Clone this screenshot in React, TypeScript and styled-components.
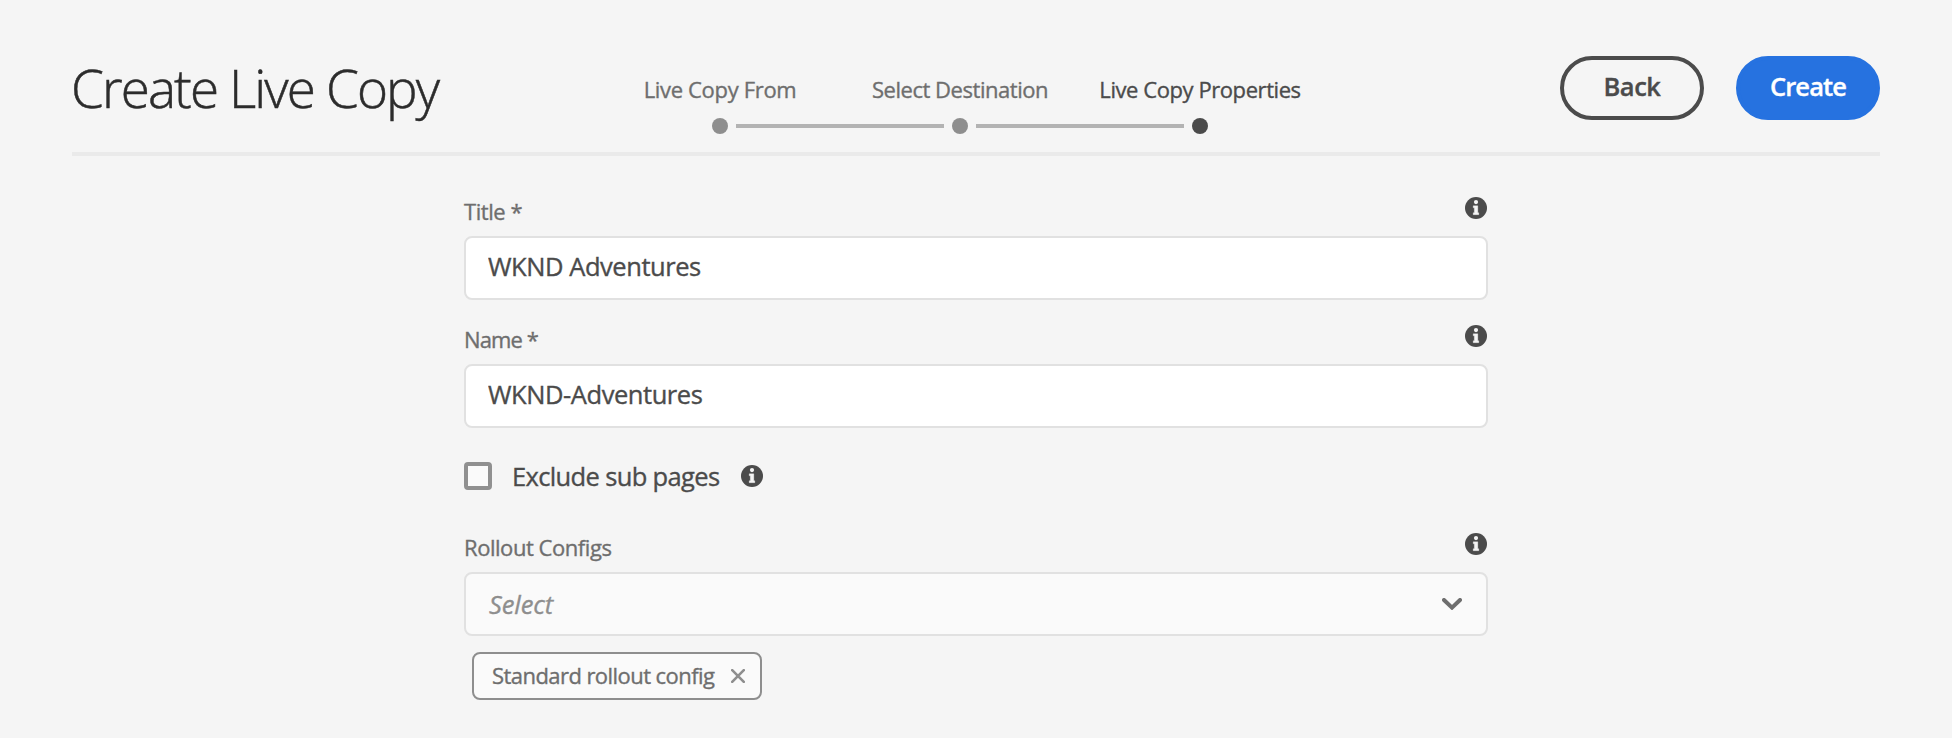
import React from 'react';
import styled, { createGlobalStyle } from 'styled-components';

const GlobalStyle = createGlobalStyle`
  *, *::before, *::after { box-sizing: border-box; }
  body {
    margin: 0;
    background: #f5f5f5;
    color: #4b4b4b;
    font-family: "Open Sans", "Noto Sans", sans-serif;
    -webkit-text-stroke-width: 0.35px;
    -webkit-font-smoothing: antialiased;
  }
`;

const Page = styled.div`
  height: 738px;
  padding: 0 72px;
  overflow: hidden;
`;

const Header = styled.header`
  display: grid;
  grid-template-columns: 528px 720px 1fr;
  height: 156px;
  border-bottom: 4px solid #eaeaea;
`;

const Heading = styled.h1`
  margin: 51px 0 0 -1px;
  font-size: 53px;
  font-weight: 300;
  line-height: 73px;
  letter-spacing: -1.9px;
  white-space: nowrap;
  color: #2c2c2c;
  -webkit-text-stroke-width: 0.5px;
`;

const Steps = styled.ol`
  display: flex;
  margin: 75px 0 0;
  padding: 0;
  list-style: none;
`;

const Step = styled.li<{ $current?: boolean }>`
  display: flex;
  flex-direction: column;
  align-items: center;
  gap: 15px;
  width: 240px;
  color: ${(p) => (p.$current ? '#4b4b4b' : '#6e6e6e')};
`;

const StepLabel = styled.span<{ $track: number }>`
  font-size: 22px;
  line-height: 28px;
  white-space: nowrap;
  letter-spacing: ${(p) => p.$track}px;
`;

const StepTrack = styled.div`
  display: grid;
  grid-template-columns: 1fr 16px 1fr;
  align-items: center;
  column-gap: 8px;
  width: 100%;
`;

const Line = styled.span<{ $hidden?: boolean }>`
  height: 4px;
  background: ${(p) => (p.$hidden ? 'transparent' : '#b3b3b3')};
`;

const Dot = styled.span<{ $current?: boolean }>`
  width: 16px;
  height: 16px;
  border-radius: 50%;
  background: ${(p) => (p.$current ? '#4b4b4b' : '#8e8e8e')};
`;

const Actions = styled.div`
  display: flex;
  justify-content: flex-end;
  gap: 32px;
  margin-top: 56px;
`;

const Button = styled.button<{ $primary?: boolean }>`
  width: 144px;
  height: 64px;
  padding: 0 0 4px;
  border: 4px solid ${(p) => (p.$primary ? '#2672e0' : '#4b4b4b')};
  border-radius: 32px;
  background: ${(p) => (p.$primary ? '#2672e0' : 'transparent')};
  color: ${(p) => (p.$primary ? '#fff' : '#4b4b4b')};
  font: 600 25.5px/34px "Open Sans", "Noto Sans", sans-serif;
  letter-spacing: ${(p) => (p.$primary ? '-0.9px' : '-0.5px')};
`;

const Form = styled.form`
  width: 1024px;
  margin: 41px auto 0;
`;

const Field = styled.div<{ $gap: number }>`
  margin-bottom: ${(p) => p.$gap}px;
`;

const LabelRow = styled.div`
  display: flex;
  justify-content: space-between;
  align-items: flex-start;
  height: 28px;
  margin-bottom: 11px;
  padding-right: 1px;
`;

const Label = styled.label<{ $track: number }>`
  font-size: 22px;
  line-height: 28px;
  letter-spacing: ${(p) => p.$track}px;
  color: #6e6e6e;
`;

const TextInput = styled.input`
  display: block;
  width: 100%;
  height: 64px;
  padding: 0 22px 4px;
  border: 2px solid #e1e1e1;
  border-radius: 8px;
  outline: none;
  background: #fff;
  color: #4b4b4b;
  font: 400 25.5px/34px "Open Sans", "Noto Sans", sans-serif;
  letter-spacing: -0.45px;
`;

const CheckRow = styled.label`
  display: flex;
  align-items: center;
  height: 34px;
  margin-bottom: 40px;
`;

const Checkbox = styled.span`
  width: 28px;
  height: 28px;
  border: 4px solid #909090;
  border-radius: 4px;
  background: #fafafa;
`;

const CheckText = styled.span`
  width: 229px;
  margin-left: 20px;
  font-size: 25.5px;
  line-height: 34px;
  letter-spacing: -0.65px;
`;

const Select = styled.div`
  display: flex;
  align-items: center;
  justify-content: space-between;
  height: 64px;
  padding: 0 24px 0 23px;
  border: 2px solid #e1e1e1;
  border-radius: 8px;
  background: #fafafa;
`;

const Placeholder = styled.span`
  font-size: 25.5px;
  font-style: italic;
  line-height: 34px;
  letter-spacing: -0.1px;
  color: #8e8e8e;
`;

const Tag = styled.div`
  display: flex;
  align-items: center;
  justify-content: space-between;
  width: 290px;
  height: 48px;
  margin: 16px 0 0 8px;
  padding: 0 15px 0 18px;
  border: 2px solid #8e8e8e;
  border-radius: 8px;
  background: #fafafa;
`;

const TagText = styled.span`
  padding-bottom: 2px;
  font-size: 22px;
  line-height: 30px;
  letter-spacing: -0.56px;
  white-space: nowrap;
  color: #6e6e6e;
`;

const InfoIcon = () => (
  <svg width="22" height="22" viewBox="0 0 22 22" aria-hidden="true">
    <circle cx="11" cy="11" r="11" fill="#4b4b4b" />
    <circle cx="11" cy="5.1" r="2.1" fill="#f5f5f5" />
    <path d="M8.2 8.8h4.6v6.9h1v2H8.2v-2h1.1v-4.9H8.2z" fill="#f5f5f5" stroke="#f5f5f5" strokeWidth=".3" strokeLinejoin="round" />
  </svg>
);

const ChevronIcon = () => (
  <svg width="20" height="12" viewBox="0 0 20 12" aria-hidden="true">
    <path d="M2 2l8 7.6L18 2" fill="none" stroke="#6e6e6e" strokeWidth="4" strokeLinecap="round" />
  </svg>
);

const CloseIcon = () => (
  <svg width="14" height="14" viewBox="0 0 14 14" aria-hidden="true">
    <path d="M1.2 1.2l11.6 11.6M12.8 1.2L1.2 12.8" fill="none" stroke="#8e8e8e" strokeWidth="2.6" strokeLinecap="round" />
  </svg>
);

const steps = [
  { label: 'Live Copy From', track: -0.33 },
  { label: 'Select Destination', track: -0.46 },
  { label: 'Live Copy Properties', track: -0.43 },
];

export default function App() {
  return (
    <>
      <GlobalStyle />
      <Page>
        <Header>
          <Heading>Create Live Copy</Heading>
          <Steps>
            {steps.map((s, i) => {
              const last = i === steps.length - 1;
              return (
                <Step key={s.label} $current={last}>
                  <StepLabel $track={s.track}>{s.label}</StepLabel>
                  <StepTrack>
                    <Line $hidden={i === 0} />
                    <Dot $current={last} />
                    <Line $hidden={last} />
                  </StepTrack>
                </Step>
              );
            })}
          </Steps>
          <Actions>
            <Button type="button">Back</Button>
            <Button type="button" $primary>Create</Button>
          </Actions>
        </Header>
        <Form>
          <Field $gap={25}>
            <LabelRow>
              <Label htmlFor="title" $track={-0.45}>Title *</Label>
              <InfoIcon />
            </LabelRow>
            <TextInput id="title" defaultValue="WKND Adventures" />
          </Field>
          <Field $gap={31}>
            <LabelRow>
              <Label htmlFor="name" $track={-0.9}>Name *</Label>
              <InfoIcon />
            </LabelRow>
            <TextInput id="name" defaultValue="WKND-Adventures" />
          </Field>
          <CheckRow>
            <Checkbox />
            <CheckText>Exclude sub pages</CheckText>
            <InfoIcon />
          </CheckRow>
          <Field $gap={0}>
            <LabelRow>
              <Label $track={-0.45}>Rollout Configs</Label>
              <InfoIcon />
            </LabelRow>
            <Select>
              <Placeholder>Select</Placeholder>
              <ChevronIcon />
            </Select>
            <Tag>
              <TagText>Standard rollout config</TagText>
              <CloseIcon />
            </Tag>
          </Field>
        </Form>
      </Page>
    </>
  );
}
